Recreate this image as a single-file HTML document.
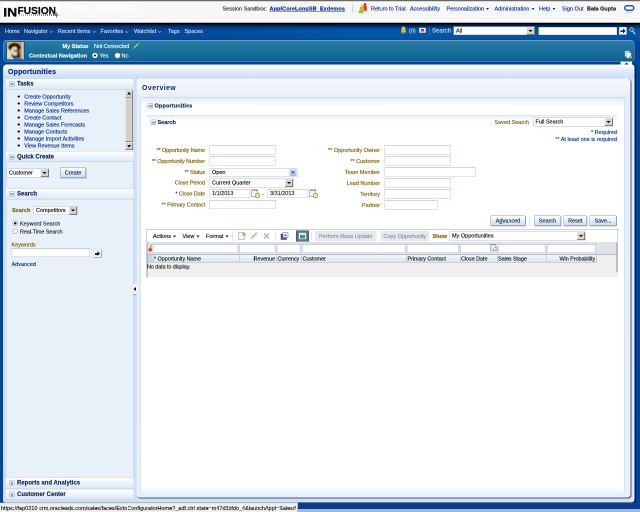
<!DOCTYPE html>
<html>
<head>
<meta charset="utf-8">
<title>Opportunities</title>
<style>
html,body{margin:0;padding:0;width:640px;height:512px;overflow:hidden;background:#00449a;}
#page{position:absolute;left:0;top:0;width:1280px;height:1024px;transform:scale(0.5);transform-origin:0 0;will-change:transform;
  font-family:"Liberation Sans",sans-serif;font-size:11px;line-height:14px;color:#222;overflow:hidden;background:#00449a;-webkit-text-stroke:0.3px;}
#page *{box-sizing:border-box;}
.a{position:absolute;}
.t{position:absolute;white-space:nowrap;font-size:11px;line-height:14px;}
.b{font-weight:bold;}
.r{text-align:right;}
.lnk{color:#0a349c;}
.nav{color:#c3d8f5;}
.w{color:#eef5fd;}
.lab{color:#80620a;}
.ls{letter-spacing:-.2px;}
.in{position:absolute;background:#fff;border:1px solid #bcc7da;border-top-color:#9eabc2;height:18px;}
.sel{position:absolute;background:#fff;border:1px solid #b3bed2;height:18px;font-size:11px;line-height:15px;padding-left:4px;color:#111;white-space:nowrap;overflow:hidden;}
.sel i{position:absolute;right:0;top:0;bottom:0;width:16px;background:#d6d3cc;border:1px solid #f4f4f4;border-right:1.500px solid #333;border-bottom:1.500px solid #333;}
.sel i:after{content:"";position:absolute;left:3px;top:5px;border:4px solid transparent;border-top:4px solid #000;border-bottom:0;}
.btn{position:absolute;height:21px;border:1px solid #8d9bb0;border-right-color:#6f7f98;border-bottom-color:#6f7f98;border-radius:2px;box-shadow:1px 1px 1px rgba(80,95,120,.45);background:linear-gradient(#fdfeff,#e6edf6 50%,#cfdbeb);font-size:11px;line-height:18px;text-align:center;color:#0d2a5c;white-space:nowrap;}
.btn.dis{box-shadow:none;color:#8a93a0;border-color:#b9c2cf;background:linear-gradient(#f6f8fb,#e1e7ef);}
.hd{position:absolute;height:22px;border-top:1px solid #c6d6ea;border-bottom:1px solid #b7c9e0;background:linear-gradient(#ffffff,#eef4fb 45%,#dce8f6);}
.disc{position:absolute;width:11px;height:11px;border:1px solid #9fadc2;border-radius:2px;background:linear-gradient(#f6f8fb,#d3dbe8);}
.disc:after{content:"";position:absolute;left:2.5px;top:1px;width:4px;height:4px;border-right:1.400px solid #333;border-bottom:1.400px solid #333;transform:rotate(45deg);}
.disc.c:after{left:1px;top:2.500px;transform:rotate(-45deg);}
.dd{display:inline-block;width:0;height:0;border:3.500px solid transparent;border-top:4px solid currentColor;border-bottom:0;vertical-align:middle;margin-left:4px;}
.chev{display:inline-block;width:5px;height:5px;border-right:1.5px solid currentColor;border-bottom:1.5px solid currentColor;transform:rotate(45deg) scale(0.9);margin-left:5px;position:relative;top:-1px;}

.st{color:#2c8a1e;}
.cal{position:absolute;width:17px;height:17px;}
.cal:before{content:"";position:absolute;left:1px;top:1px;width:11px;height:12px;background:#f4f6fa;border:1px solid #66758f;border-top:2px solid #55689a;}
.cal:after{content:"";position:absolute;left:8px;top:8px;width:8px;height:8px;border-radius:4px;background:#f7e3a0;border:1.500px solid #c8461e;}
.sel i.x{background:linear-gradient(#cfe0ff,#9db9f0);border:1px solid #fff;border-radius:2px;}
.sel i.x:after{border-top-color:#24407a;}

.fc{position:absolute;top:488px;height:18px;background:#fff;border:1px solid #b9c3d0;border-top-color:#93a0b2;}
.hc{position:absolute;top:509px;height:15px;font-size:11px;line-height:16.500px;letter-spacing:-.15px;color:#222;white-space:nowrap;overflow:hidden;border-left:1px solid #aab2bf;padding:0 2px 0 1px;}
.bu{display:inline-block;width:4.500px;height:4.500px;border-radius:3px;background:#0c0c14;margin:0 9px 2px 1px;vertical-align:middle;}
</style>
</head>
<body>
<div id="page">

<!-- ===== top header ===== -->
<div class="a" style="left:0;top:0;width:1280px;height:46px;background:linear-gradient(#fff 0,#fff 4px,#f7f7f7 5px,#f7f7f7 42px,#fff 43px,#fff 100%);"></div>
<div class="a" style="left:0;top:0;width:1280px;height:3px;background:linear-gradient(#4a4a4a,#8a8a8a 70%,#ddd);"></div>
<div class="a" style="left:0;top:45px;width:1280px;height:4px;background:linear-gradient(#999,#000 35%,#000 70%,#010a1c);"></div>
<div class="a" style="left:6px;top:4px;width:114px;height:34px;background:#fff;"></div>
<svg class="a" style="left:0;top:0;" width="130" height="44" viewBox="0 0 130 44">
 <text x="6.500" y="32.500" font-family="Liberation Sans, sans-serif" font-weight="bold" font-size="24.500" textLength="28" lengthAdjust="spacingAndGlyphs" fill="#0a0a0a" stroke="#0a0a0a" stroke-width=".6">IN</text>
 <text x="35" y="27.500" font-family="Liberation Sans, sans-serif" font-weight="bold" font-size="20" textLength="77" lengthAdjust="spacingAndGlyphs" fill="#0a0a0a" stroke="#0a0a0a" stroke-width=".5">FUSION</text>
 <defs><linearGradient id="lg1" gradientUnits="userSpaceOnUse" x1="38" y1="0" x2="114" y2="0"><stop offset="0" stop-color="#9db8e6"/><stop offset="1" stop-color="#12408f"/></linearGradient></defs>
 <path d="M38 30H114" stroke="url(#lg1)" stroke-width="3" stroke-dasharray="2 2"/>
 <path d="M113 25v10M108 30h10" stroke="#1c4ea6" stroke-width="1.500"/>
</svg>
<div class="t" style="left:128px;top:3px;font-size:18px;line-height:22px;color:#fff;-webkit-text-stroke:0;">Fusion Applications</div>

<div class="t" style="left:445px;top:10px;color:#333;">Session Sandbox:</div>
<div class="t b lnk" id="sb" style="left:539px;top:10px;text-decoration:underline;letter-spacing:.2px;">ApplCoreLongSB_Exdemos</div>
<div class="a" style="left:705px;top:8px;width:1px;height:17px;background:#b5b5b5;"></div>
<svg class="a" style="left:716px;top:5px;" width="20" height="23" viewBox="0 0 20 23">
 <circle cx="14" cy="3.800" r="2.700" fill="#d8281e"/><path d="M10.500 7.500q3.500-2 7 0v9h-7z" fill="#d8281e"/>
 <circle cx="9" cy="6.500" r="2.600" fill="#f2c21a"/><path d="M5.500 10q3.500-2 7 0v5.500h-7z" fill="#f2c21a"/>
 <circle cx="6.300" cy="11.500" r="2.900" fill="#8cc63f"/><path d="M1.500 16q5-2.500 9.500 0v5.500h-9.500z" fill="#8cc63f"/>
</svg>
<div class="t lnk" style="left:742px;top:10px;">Return to Trial</div>
<div class="t lnk" style="left:820px;top:10px;">Accessibility</div>
<div class="t lnk" style="left:893px;top:10px;">Personalization<span class="dd"></span></div>
<div class="t lnk" style="left:989px;top:10px;">Administration<span class="dd"></span></div>
<div class="t lnk" style="left:1078px;top:10px;">Help<span class="dd"></span></div>
<div class="t lnk" style="left:1124px;top:10px;">Sign Out</div>
<div class="t b" style="left:1174px;top:10px;color:#222;">Bala Gupta</div>
<div class="a" style="left:1248px;top:10px;width:21px;height:12px;border:3px solid #1f5bbf;border-radius:6px;background:#fff;"></div><div class="a" style="left:1252px;top:24px;width:13px;height:2px;border-radius:1px;background:#bcd0ee;"></div>

<!-- ===== nav bar ===== -->
<div class="a" style="left:0;top:48px;width:1280px;height:34px;background:linear-gradient(#010c22 0,#00234f 3px,#003f85 7px,#0052a0 11px,#0055a5 14px,#0055a5 27px,#004c9a 31px,#004c9a 100%);"></div>
<div class="a" style="left:0;top:50px;width:700px;height:30px;background:linear-gradient(90deg,rgba(20,41,111,.55),rgba(20,41,111,0));"></div>
<div class="t nav" style="left:10px;top:55px;">Home</div>
<div class="t nav" style="left:48px;top:55px;">Navigator<span class="chev"></span></div>
<div class="t nav" style="left:116px;top:55px;">Recent Items<span class="chev"></span></div>
<div class="t nav" style="left:201px;top:55px;">Favorites<span class="chev"></span></div>
<div class="t nav" style="left:268px;top:55px;">Watchlist<span class="chev"></span></div>
<div class="t nav" style="left:336px;top:55px;">Tags</div>
<div class="t nav" style="left:369px;top:55px;">Spaces</div>
<svg class="a" style="left:800px;top:52px;" width="14" height="16" viewBox="0 0 14 16"><path d="M7 1c-3 0-4 2.500-4 5v4l-2 3h12l-2-3v-4c0-2.500-1-5-4-5z" fill="#f2b632"/><rect x="5" y="13.500" width="4" height="2" fill="#d99a1c"/></svg>
<div class="t nav" style="left:818px;top:54px;">(0)</div>
<div class="a" style="left:838px;top:55px;width:14px;height:11px;background:#e8e8ee;border:1px solid #8a94a8;"><div class="a" style="left:3px;top:2px;width:6px;height:5px;background:#d22;"></div></div>
<div class="a" style="left:858px;top:53px;width:1px;height:17px;background:#5d83bd;"></div>
<div class="t nav" style="left:864px;top:54px;font-size:12px;">Search</div>
<div class="sel" style="left:907px;top:53px;width:163px;height:17px;">All<i></i></div>
<div class="in" style="left:1077px;top:54px;width:157px;height:16px;"></div>
<div class="a" style="left:1238px;top:54px;width:16px;height:16px;background:#f2f5fa;border:1px solid #c9d3e2;border-right-color:#5a6a86;border-bottom-color:#5a6a86;"><div class="a" style="left:2px;top:5.500px;width:7px;height:3px;background:#0a1f5c;"></div><div class="a" style="left:7px;top:2px;border:5px solid transparent;border-left:5px solid #0a1f5c;border-right:0;"></div></div>
<svg class="a" style="left:1257px;top:54px;" width="16" height="16" viewBox="0 0 16 16"><circle cx="6" cy="5" r="3.500" fill="none" stroke="#cfe0f7" stroke-width="1.500"/><path d="M8 8l5 6" stroke="#cfe0f7" stroke-width="2"/><path d="M9 2l5 3-4 2z" fill="#d33"/></svg>

<!-- ===== blue status panel ===== -->
<div class="a" style="left:6px;top:80px;width:1263px;height:44px;border:1.500px solid #5f9bd0;border-top-width:2px;border-radius:7px;background:linear-gradient(#2a7da6,#1a709b 50%,#115f8e);"></div>
<div class="a" style="left:12.500px;top:82.500px;width:37px;height:38px;background:#0b54a4;"></div>
<svg class="a" id="avatar" style="left:14px;top:84px;" width="34" height="35" viewBox="0 0 34 35">
 <defs><linearGradient id="avg" x1="0" x2="1" y1="0" y2="0"><stop offset="0" stop-color="#d9b868"/><stop offset=".5" stop-color="#c29a3e"/><stop offset=".86" stop-color="#c9a552"/><stop offset=".9" stop-color="#e9dfc6"/><stop offset=".95" stop-color="#d7b970"/><stop offset="1" stop-color="#c49b3c"/></linearGradient>
 <filter id="avb" x="-10%" y="-10%" width="120%" height="120%"><feGaussianBlur stdDeviation="1"/></filter></defs>
 <rect width="34" height="35" fill="url(#avg)"/>
 <g filter="url(#avb)">
  <path d="M0 20c0-5 3-9 8-9v22h-8z" fill="#ecdcae"/>
  <ellipse cx="15" cy="11" rx="12" ry="8.500" fill="#1b1714"/>
  <ellipse cx="15.500" cy="19" rx="8.500" ry="10" fill="#e6d2a4"/>
  <path d="M20 11c5 2 7 8 5 16l-6 3c1-6 2-12 0-19z" fill="#5e3f34"/>
  <path d="M14 16.500h7v2.500h-7z" fill="#2a1a16"/>
  <path d="M8 23c2 5 6 8 10 8s7-3 8-7c-3 3-6 4-9 4s-6-2-9-5z" fill="#2b211b"/>
  <path d="M10 25c3 3 10 4 16-1v7h-15z" fill="#2c201a"/>
  <path d="M4 36c1-4 5-5.500 12-5 9-.5 14 1 16 5z" fill="#3f6fb8"/>
  <path d="M6 35c1-3 3-4.500 6-4.500l-1 5z" fill="#e9edf5"/>
 </g>
</svg>
<div class="t b w r" style="left:57px;width:120px;top:85px;">My Status</div>
<div class="t w" style="left:188px;top:85px;letter-spacing:-.25px;">Not Connected</div>
<svg class="a" style="left:263px;top:83px;" width="18" height="18" viewBox="0 0 18 18"><path d="M2 16l3-5 8-8 3-1-1 3-8 8z" fill="#35d455" stroke="#1f7a3a" stroke-width=".8"/><path d="M6 12l7-7" stroke="#c8f7ee" stroke-width="1.600"/><path d="M2 16l2-1M15 3l1-1" stroke="#9aa" stroke-width="1.500"/></svg>
<div class="t b w r" style="left:37px;width:137px;top:104px;">Contextual Navigation</div>
<div class="a" style="left:184px;top:105px;width:12px;height:12px;border-radius:6px;background:#fff;border:1px solid #6d7f95;"><div class="a" style="left:3px;top:3px;width:4px;height:4px;border-radius:2px;background:#111;"></div></div>
<div class="t w" style="left:199px;top:104px;">Yes</div>
<div class="a" style="left:229px;top:105px;width:12px;height:12px;border-radius:6px;background:#fff;border:1px solid #6d7f95;"></div>
<div class="t w" style="left:243px;top:104px;">No</div>
<svg class="a" style="left:1249px;top:101px;" width="16" height="17" viewBox="0 0 16 17"><rect x="1" y="1" width="9" height="11" fill="#e9eef5" stroke="#8b9bb3"/><rect x="4" y="4" width="9" height="11" fill="#f6f8fb" stroke="#8b9bb3"/><circle cx="12" cy="13" r="3" fill="#e8a21c"/></svg>
<div class="a" style="left:1241px;top:123px;width:23px;height:9px;background:#eef3fa;border-radius:0 0 3px 3px;"><div class="a" style="left:8px;top:2px;border:4px solid transparent;border-bottom:4px solid #223;border-top:0;"></div></div>

<!-- ===== outer page panel ===== -->
<div class="a" style="left:6px;top:129px;width:1263px;height:876px;border-radius:8px 6px 6px 4px;background:#cfdff5;box-shadow:1.500px 1.500px 1.500px #021744;"></div>
<div class="a" style="left:6px;top:129px;width:1263px;height:27px;border-radius:8px 6px 0 0;background:linear-gradient(#fff 0,#fff 3px,#e6effa 10px,#cfdff5 25px);"></div>
<div class="a" style="left:1263px;top:156px;width:6px;height:846px;background:#e3ecf8;border-radius:0 0 5px 0;"></div>
<div class="t b" id="ttl" style="left:16px;top:135px;font-size:14px;line-height:17px;color:#0c2c8a;letter-spacing:.35px;">Opportunities</div>

<!-- ===== left panel ===== -->
<div class="a" style="left:12px;top:157px;width:255px;height:843px;background:#e8f0f9;border:1px solid #c3d5ea;"></div>
<div class="hd" style="left:12px;top:157px;width:255px;"></div>
<div class="disc" style="left:18px;top:162px;"></div>
<div class="t b" style="left:34px;top:160px;font-size:12px;line-height:15px;color:#0d2a5c;">Tasks</div>
<div class="a" style="left:250px;top:180px;width:16px;height:120px;background:#d4d0c8;border-left:1px solid #f5f5f5;"></div>
<div class="a" style="left:250px;top:180px;width:16px;height:15px;background:#d4d0c8;border:1px solid #fff;border-right-color:#444;border-bottom-color:#444;"><div class="a" style="left:2.500px;top:3px;border:4.500px solid transparent;border-bottom:5px solid #000;border-top:0;"></div></div>
<div class="a" style="left:250px;top:285px;width:16px;height:15px;background:#d4d0c8;border:1px solid #fff;border-right-color:#444;border-bottom-color:#444;"><div class="a" style="left:2.500px;top:4px;border:4.500px solid transparent;border-top:5px solid #000;border-bottom:0;"></div></div>
<div class="a" style="left:250px;top:195px;width:16px;height:88px;background:#d4d0c8;border:1px solid #fff;border-right-color:#444;border-bottom-color:#444;"></div>
<div id="tasks" class="a" style="left:34px;top:186px;width:215px;color:#0a349c;line-height:14px;">
<div><i class="bu"></i>Create Opportunity</div>
<div><i class="bu"></i>Review Competitors</div>
<div><i class="bu"></i>Manage Sales References</div>
<div><i class="bu"></i>Create Contact</div>
<div><i class="bu"></i>Manage Sales Forecasts</div>
<div><i class="bu"></i>Manage Contacts</div>
<div><i class="bu"></i>Manage Import Activities</div>
<div><i class="bu"></i>View Revenue Items</div>
</div>
<div class="hd" style="left:12px;top:302px;width:255px;"></div>
<div class="disc" style="left:18px;top:308px;"></div>
<div class="t b" style="left:34px;top:306px;font-size:12px;line-height:15px;color:#0d2a5c;">Quick Create</div>
<div class="sel" style="left:13px;top:337px;width:85px;">Customer<i></i></div>
<div class="btn" style="left:120px;top:335px;width:52px;">Create</div>
<div class="hd" style="left:12px;top:377px;width:255px;"></div>
<div class="disc" style="left:18px;top:382px;"></div>
<div class="t b" style="left:34px;top:380px;font-size:12px;line-height:15px;color:#0d2a5c;">Search</div>
<div class="t b lab" style="left:24px;top:413px;">Search</div>
<div class="sel" style="left:67px;top:412px;width:88px;">Competitors<i></i></div>
<div class="a" style="left:25px;top:441px;width:11px;height:11px;border-radius:6px;background:#fff;border:1px solid #6d7f95;"><div class="a" style="left:2px;top:2px;width:5px;height:5px;border-radius:3px;background:#111;"></div></div>
<div class="t" style="left:40px;top:440px;color:#262b36;">Keyword Search</div>
<div class="a" style="left:25px;top:457px;width:11px;height:11px;border-radius:6px;background:#fff;border:1px solid #6d7f95;"></div>
<div class="t" style="left:40px;top:456px;color:#262b36;letter-spacing:-.2px;">Real-Time Search</div>
<div class="t lab" style="left:23px;top:482px;">Keywords</div>
<div class="in" style="left:22px;top:497px;width:158px;height:17px;"></div>
<div class="a" style="left:187px;top:499px;width:16px;height:16px;background:#f2f5fa;border:1px solid #c9d3e2;border-right-color:#5a6a86;border-bottom-color:#5a6a86;"><div class="a" style="left:2px;top:5.500px;width:7px;height:3px;background:#0a1f5c;"></div><div class="a" style="left:7px;top:2px;border:5px solid transparent;border-left:5px solid #0a1f5c;border-right:0;"></div></div>
<div class="t lnk" style="left:23px;top:521px;">Advanced</div>
<div class="hd" style="left:12px;top:955px;width:255px;"></div>
<div class="disc c" style="left:18px;top:960px;"></div>
<div class="t b" style="left:34px;top:958px;font-size:12px;line-height:15px;color:#0d2a5c;">Reports and Analytics</div>
<div class="hd" style="left:12px;top:978px;width:255px;"></div>
<div class="disc c" style="left:18px;top:983px;"></div>
<div class="t b" style="left:34px;top:981px;font-size:12px;line-height:15px;color:#0d2a5c;">Customer Center</div>
<!-- splitter handle -->
<div class="a" style="left:267px;top:568px;width:7px;height:21px;background:#fff;border-right:1px solid #555;border-bottom:1px solid #555;"><div class="a" style="left:0;top:6px;border:4px solid transparent;border-right:5px solid #000;border-left:0;"></div></div>

<!-- ===== main panel ===== -->
<div class="a" style="left:273px;top:157px;width:988px;height:838px;border-radius:7px;background:linear-gradient(#f5f8fc 0,#eaf1f9 30px,#e4edf8 40px,#e8f0f8 100%);box-shadow:1.500px 1.500px 1.500px #44557a;"></div>
<div class="t b" id="ov" style="left:284px;top:166px;font-size:14px;line-height:18px;color:#14306a;letter-spacing:.75px;-webkit-text-stroke:0;">Overview</div>
<div class="a" style="left:281px;top:194px;width:968px;height:791px;border-radius:6px;background:linear-gradient(#dde8f6 0,#f4f8fc 10px,#fff 18px,#fff 776px,#f1f5fb 790px);border:1px solid #c4d4ea;border-bottom-color:#eef3fa;"></div>
<div class="disc" style="left:295px;top:206px;"></div>
<div class="t b" id="op2" style="left:309px;top:204px;color:#0d2a5c;letter-spacing:.3px;">Opportunities</div>
<!-- search sub panel -->
<div class="a" style="left:294px;top:230px;width:941px;height:226px;border-radius:5px 5px 0 0;border-top:1px solid #c9d8ec;background:linear-gradient(#e6eef9 0,#f8fafd 6px,#fff 12px);"></div>
<div class="disc" style="left:301px;top:239px;"></div>
<div class="t b" style="left:315px;top:237px;color:#0d2a5c;">Search</div>
<div class="t lab r" style="left:958px;width:100px;top:237px;">Saved Search</div>
<div class="sel" style="left:1066px;top:235px;width:160px;">Full Search<i></i></div>
<div class="t lnk r" style="left:1100px;width:134px;top:257px;">* Required</div>
<div class="t lnk r" style="left:1060px;width:174px;top:271px;"><span style="color:#2c8a1e;">**</span> At least one is required</div>

<div class="t lab r ls" style="left:260px;width:150px;top:293px;"><span class="st">**</span> Opportunity Name</div>
<div class="t lab r ls" style="left:260px;width:150px;top:315px;"><span class="st">**</span> Opportunity Number</div>
<div class="t lab r ls" style="left:260px;width:150px;top:337px;"><span class="st">**</span> Status</div>
<div class="t lab r ls" style="left:260px;width:150px;top:358px;">Close Period</div>
<div class="t lab r ls" style="left:260px;width:150px;top:380px;"><span class="lnk">*</span> Close Date</div>
<div class="t lab r ls" style="left:260px;width:150px;top:402px;"><span class="st">**</span> Primary Contact</div>
<div class="in" style="left:419px;top:291px;width:132px;"></div>
<div class="in" style="left:419px;top:313px;width:132px;"></div>
<div class="sel" style="left:419px;top:336px;width:176px;">Open<i class="x"></i></div>
<div class="sel" style="left:419px;top:357px;width:168px;">Current Quarter<i></i></div>
<div class="in" style="left:419px;top:378px;width:81px;font-size:11px;line-height:15px;padding-left:4px;">1/1/2013</div>
<div class="cal" style="left:502px;top:378px;"></div>
<div class="t" style="left:524px;top:380px;">-</div>
<div class="in" style="left:535px;top:378px;width:81px;font-size:11px;line-height:15px;padding-left:4px;">3/31/2013</div>
<div class="cal" style="left:618px;top:378px;"></div>
<div class="in" style="left:419px;top:400px;width:132px;"></div>

<div class="t lab r" style="left:610px;width:150px;top:293px;"><span class="st">**</span> Opportunity Owner</div>
<div class="t lab r" style="left:610px;width:150px;top:315px;"><span class="st">**</span> Customer</div>
<div class="t lab r" style="left:610px;width:150px;top:337px;">Team Member</div>
<div class="t lab r" style="left:610px;width:150px;top:359px;">Lead Number</div>
<div class="t lab r" style="left:610px;width:150px;top:381px;">Territory</div>
<div class="t lab r" style="left:610px;width:150px;top:403px;">Partner</div>
<div class="in" style="left:769px;top:291px;width:133px;"></div>
<div class="in" style="left:769px;top:313px;width:133px;"></div>
<div class="in" style="left:769px;top:335px;width:182px;"></div>
<div class="in" style="left:769px;top:357px;width:133px;"></div>
<div class="in" style="left:769px;top:379px;width:133px;"></div>
<div class="in" style="left:769px;top:401px;width:106px;"></div>

<div class="btn" style="left:981px;top:431px;width:70px;">A<u>d</u>vanced</div>
<div class="a" style="left:1058px;top:433px;width:1px;height:17px;background:#c5cedb;"></div>
<div class="btn" style="left:1068px;top:431px;width:54px;">Search</div>
<div class="btn" style="left:1127px;top:431px;width:47px;">Reset</div>
<div class="btn" style="left:1179px;top:431px;width:54px;">Save...</div>

<!-- ===== results table ===== -->
<div class="a" style="left:293px;top:458px;width:943px;height:27px;background:#fff;border:1px solid #95a5bd;border-bottom:0;"></div>
<div class="t" style="left:306px;top:465px;color:#111;">Actions<span class="dd"></span></div>
<div class="t" style="left:365px;top:465px;color:#111;">View<span class="dd"></span></div>
<div class="t" style="left:412px;top:465px;color:#111;">Format<span class="dd"></span></div>
<div class="a" style="left:465px;top:463px;width:1px;height:18px;background:#c3cddb;"></div>
<svg class="a" style="left:475px;top:463px;" width="18" height="18" viewBox="0 0 18 18"><path d="M2 2h9l3 3v11h-12z" fill="#fbfcfe" stroke="#7f8ea8"/><path d="M13 1l1.200 2.600 2.800.400-2 2 .500 2.800-2.500-1.300-2.500 1.300.500-2.800-2-2 2.800-.400z" fill="#f2a81d" stroke="#c77a0a" stroke-width=".5"/></svg>
<svg class="a" style="left:500px;top:463px;" width="16" height="18" viewBox="0 0 16 18"><path d="M2 15l2-5 8-8 2 2-8 8z" fill="#c9ccd2" stroke="#9a9fa8"/></svg>
<svg class="a" style="left:525px;top:464px;" width="16" height="16" viewBox="0 0 16 16"><path d="M3 3l10 10M13 3l-10 10" stroke="#a9adb5" stroke-width="2.500"/></svg>
<div class="a" style="left:550px;top:463px;width:1px;height:18px;background:#c3cddb;"></div>
<svg class="a" style="left:560px;top:463px;" width="18" height="18" viewBox="0 0 18 18"><rect x="2" y="5" width="11" height="11" fill="#3d5f9e" stroke="#22386a"/><rect x="6" y="2" width="10" height="10" fill="#eef2f8" stroke="#5a6f94"/><path d="M8 9l3-4 3 4z" fill="#2f8a3a"/></svg>
<div class="a" style="left:592px;top:461px;width:26px;height:22px;background:#5b7097;border:1px solid #33466b;"><div class="a" style="left:4px;top:3px;width:16px;height:14px;background:#dfe8f5;border:1px solid #93a5c4;"></div><div class="a" style="left:7px;top:8px;width:10px;height:7px;background:#4d9a4a;"></div></div>
<div class="a" style="left:622px;top:463px;width:1px;height:18px;background:#c3cddb;"></div>
<div class="btn dis" style="left:630px;top:462px;width:123px;height:20px;border-color:#e2e6ec;background:#e6eaef;border-radius:0;">Perform Mass Update</div>
<div class="btn dis" style="left:761px;top:462px;width:97px;height:20px;border-color:#e2e6ec;background:#e6eaef;border-radius:0;">Copy Opportunity</div>
<div class="t b lab" style="left:865px;top:465px;">Show</div>
<div class="sel" style="left:899px;top:463px;width:272px;">My Opportunities<i></i></div>

<div class="a" style="left:293px;top:485px;width:943px;height:70px;background:#efefef;border-left:2px solid #9a9a9a;"></div>
<div class="a" style="left:1233px;top:485px;width:2px;height:59px;background:#8f8f8f;"></div>
<!-- filter row -->
<div class="a" style="left:295px;top:485px;width:938px;height:24px;background:#dfe2e6;border-top:1px solid #b9c0ca;border-bottom:1px solid #b9c0ca;"></div>
<div class="a" style="left:296px;top:489px;width:9px;height:14px;"><div class="a" style="left:1px;top:7px;width:7px;height:7px;border-radius:4px;background:#d5401c;"></div><div class="a" style="left:5px;top:0;width:2px;height:8px;background:#b8863a;transform:rotate(25deg);"></div></div>
<div class="fc" style="left:306px;width:170px;"></div>
<div class="fc" style="left:479px;width:72px;"></div>
<div class="fc" style="left:554px;width:47px;"></div>
<div class="fc" style="left:604px;width:207px;"></div>
<div class="fc" style="left:814px;width:104px;"></div>
<div class="fc" style="left:921px;width:60px;"></div>
<div class="cal" style="left:979px;top:486px;transform:scale(.8);"></div>
<div class="fc" style="left:996px;width:95px;"></div>
<div class="fc" style="left:1094px;width:97px;"></div>
<!-- header row -->
<div class="a" style="left:295px;top:509px;width:899px;height:16px;background:linear-gradient(#f4f6f9,#dfe4ea);border-bottom:1px solid #aab2bf;"></div>
<div class="a" style="left:295px;top:509px;width:10px;height:15px;background:#cfd4db;"></div>
<div class="hc" style="left:306px;width:171px;"><span class="lnk">*</span> Opportunity Name</div>
<div class="hc r" style="left:478px;width:74px;">Revenue</div>
<div class="hc" style="left:553px;width:49px;">Currency</div>
<div class="hc" style="left:603px;width:209px;">Customer</div>
<div class="hc" style="left:813px;width:106px;">Primary Contact</div>
<div class="hc" style="left:920px;width:74px;">Close Date</div>
<div class="hc" style="left:994px;width:98px;">Sales Stage</div>
<div class="hc r" style="left:1092px;width:101px;border-right:1px solid #aab2bf;">Win Probability</div>
<div class="t" style="left:294px;top:526px;color:#222;letter-spacing:-.2px;">No data to display.</div>

<!-- ===== bottom / status ===== -->
<div class="a" style="left:0;top:1006px;width:1280px;height:12px;background:#0b3f8a;"></div>
<div class="a" style="left:0;top:1018px;width:1280px;height:6px;background:#a8b6cf;"></div>
<div class="a" style="left:0;top:1005px;width:596px;height:19px;background:linear-gradient(#dfe3ea,#f3f3f3 5px,#f0f0f0);border-top:1px solid #8a94a6;border-right:1px solid #8a94a6;"></div>
<div class="t" id="url" style="left:2px;top:1009px;color:#222;">https://fap0210-crm.oracleads.com/sales/faces/ExtnConfiguratorHome?_adf.ctrl-state=m47d3zfdo_4&amp;launchAppl=Sales#</div>

</div>
</body>
</html>
